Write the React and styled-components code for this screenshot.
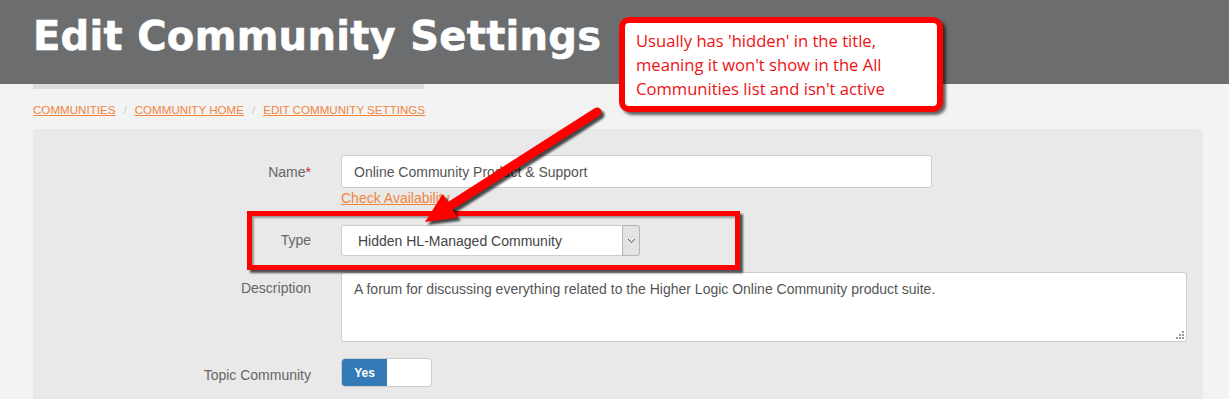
import React from "react";
import styled, { createGlobalStyle } from "styled-components";

const GlobalStyle = createGlobalStyle`
  html, body { margin: 0; padding: 0; background: #f3f3f3; }
  body {
    font-family: "Liberation Sans", Arial, sans-serif;
    width: 1229px;
    height: 399px;
    overflow: hidden;
  }
`;

const Page = styled.div`
  position: relative;
  width: 1229px;
  height: 399px;
  overflow: hidden;
  background: #f3f3f3;
`;

const Header = styled.header`
  box-sizing: border-box;
  height: 84px;
  padding: 13px 0 0 33px;
  background: #6c6d6f;
`;

const Title = styled.h1`
  margin: 0;
  font-family: "DejaVu Sans", "Liberation Sans", Arial, sans-serif;
  font-size: 40px;
  line-height: 46px;
  font-weight: 700;
  letter-spacing: 0.3px;
  color: #ffffff;
  -webkit-text-stroke: 0.6px #ffffff;
`;

const HeaderLip = styled.div`
  margin-left: 33px;
  width: 391px;
  height: 5px;
  background: #dcdcdc;
`;

const Breadcrumbs = styled.nav`
  display: flex;
  margin: 12px 0 0 33px;
  font-size: 11.6px;
  line-height: 17px;
`;

const Crumb = styled.a`
  color: #f0853c;
  text-decoration: underline;
  text-transform: uppercase;
`;

const Sep = styled.span`
  color: #cccccc;
  padding: 0 8px;
`;

const Panel = styled.section`
  box-sizing: border-box;
  margin: 11px 26px 0 33px;
  height: 300px;
  padding: 26px 16px 0 0;
  background: #e9e9e9;
  border-radius: 4px;
`;

const Form = styled.div`
  display: grid;
  grid-template-columns: 278px 1fr;
  column-gap: 30px;
`;

const Label = styled.label`
  text-align: right;
  font-size: 14px;
  line-height: 20px;
  color: #666666;
  padding-top: ${(p) => p.$pt}px;
  margin-top: ${(p) => p.$mt || 0}px;
`;

const Req = styled.span`
  color: #e0202a;
`;

const Field = styled.div`
  margin-top: ${(p) => p.$mt || 0}px;
  display: flex;
  flex-direction: column;
  align-items: flex-start;
`;

const TextInput = styled.div`
  box-sizing: border-box;
  display: flex;
  align-items: center;
  width: 591px;
  height: 33px;
  padding: 0 12px;
  background: #ffffff;
  border: 1px solid #cccccc;
  border-radius: 3px;
  font-size: 14px;
  color: #555555;
`;

const Link = styled.a`
  font-size: 14px;
  line-height: 20px;
  color: #f0853c;
  text-decoration: underline;
`;

const Select = styled.div`
  box-sizing: border-box;
  display: flex;
  width: 299px;
  height: 31px;
  background: #ffffff;
  border: 1px solid #cccccc;
  border-radius: 3px;
`;

const SelectValue = styled.div`
  flex: 1;
  display: flex;
  align-items: center;
  padding-left: 16px;
  font-size: 14px;
  color: #444444;
`;

const SelectArrow = styled.div`
  width: 16px;
  margin: -1px -1px -1px 0;
  display: flex;
  align-items: center;
  justify-content: center;
  background: #e3e3e3;
  border: 1px solid #b5b5b5;
  border-radius: 0 3px 3px 0;
`;

const TextArea = styled.div`
  position: relative;
  box-sizing: border-box;
  width: 846px;
  height: 70px;
  padding: 6px 12px;
  background: #ffffff;
  border: 1px solid #cccccc;
  border-radius: 3px;
  font-size: 14px;
  line-height: 20px;
  color: #555555;
`;

const Grip = styled.svg`
  position: absolute;
  right: 2px;
  bottom: 2px;
`;

const Toggle = styled.div`
  box-sizing: border-box;
  display: flex;
  width: 91px;
  height: 29px;
  background: #ffffff;
  border: 1px solid #cccccc;
  border-radius: 4px;
  overflow: hidden;
`;

const ToggleOn = styled.div`
  width: 45px;
  display: flex;
  align-items: center;
  justify-content: center;
  background: #337ab7;
  color: #ffffff;
  font-size: 12px;
  font-weight: 700;
`;

/* annotation overlays */
const HighlightBox = styled.div`
  position: absolute;
  left: 247px;
  top: 211px;
  width: 493px;
  height: 59px;
  box-sizing: border-box;
  border: 5px solid #ff0000;
  box-shadow: 3px 3px 2px rgba(0, 0, 0, 0.65), inset 2px 2px 2px rgba(0, 0, 0, 0.35);
  pointer-events: none;
`;

const Callout = styled.div`
  position: absolute;
  left: 619px;
  top: 17px;
  width: 324px;
  height: 95px;
  box-sizing: border-box;
  padding: 6px 6px 0 11px;
  background: #ffffff;
  border: 6px solid #ff0000;
  border-radius: 10px;
  box-shadow: 3px 3px 3px rgba(0, 0, 0, 0.6);
  font-family: "Open Sans", "Noto Sans", sans-serif;
  font-size: 16.6px;
  line-height: 24px;
  white-space: nowrap;
  color: #ee1212;
`;

const ArrowSvg = styled.svg`
  position: absolute;
  left: 0;
  top: 0;
  pointer-events: none;
`;

function Arrow() {
  const tail = [597, 112];
  const tip = [425, 222];
  const dx = tip[0] - tail[0];
  const dy = tip[1] - tail[1];
  const len = Math.hypot(dx, dy);
  const ux = dx / len;
  const uy = dy / len;
  const px = -uy;
  const py = ux;
  const headLen = 30;
  const half = 14;
  const bx = tip[0] - ux * headLen;
  const by = tip[1] - uy * headLen;
  const head = `${tip[0]},${tip[1]} ${bx + px * half},${by + py * half} ${bx - px * half},${by - py * half}`;
  const shaftEnd = [bx + ux * 4, by + uy * 4];
  return (
    <ArrowSvg width="1229" height="399" viewBox="0 0 1229 399">
      <defs>
        <filter id="blur" x="-10%" y="-10%" width="120%" height="120%">
          <feGaussianBlur stdDeviation="1.2" />
        </filter>
      </defs>
      <g transform="translate(3 3)" fill="rgba(0,0,0,0.7)" stroke="rgba(0,0,0,0.7)" filter="url(#blur)">
        <line x1={tail[0]} y1={tail[1]} x2={shaftEnd[0]} y2={shaftEnd[1]} strokeWidth="9" strokeLinecap="round" />
        <polygon points={head} stroke="none" />
      </g>
      <g fill="#ff0000" stroke="#ff0000">
        <line x1={tail[0]} y1={tail[1]} x2={shaftEnd[0]} y2={shaftEnd[1]} strokeWidth="9" strokeLinecap="round" />
        <polygon points={head} stroke="none" />
      </g>
    </ArrowSvg>
  );
}

export default function App() {
  return (
    <Page>
      <GlobalStyle />
      <Header>
        <Title>Edit Community Settings</Title>
      </Header>
      <HeaderLip />
      <Breadcrumbs>
        <Crumb>Communities</Crumb>
        <Sep>/</Sep>
        <Crumb>Community Home</Crumb>
        <Sep>/</Sep>
        <Crumb>Edit Community Settings</Crumb>
      </Breadcrumbs>
      <Panel>
        <Form>
          <Label $pt={7}>
            Name<Req>*</Req>
          </Label>
          <Field>
            <TextInput>Online Community Product &amp; Support</TextInput>
            <Link>Check Availability</Link>
          </Field>

          <Label $pt={5} $mt={17}>Type</Label>
          <Field $mt={17}>
            <Select>
              <SelectValue>Hidden HL-Managed Community</SelectValue>
              <SelectArrow>
                <svg width="9" height="6" viewBox="0 0 9 6">
                  <path d="M1 1 L4.5 4.5 L8 1" fill="none" stroke="#555" strokeWidth="1" />
                </svg>
              </SelectArrow>
            </Select>
          </Field>

          <Label $pt={6} $mt={16}>Description</Label>
          <Field $mt={16}>
            <TextArea>
              A forum for discussing everything related to the Higher Logic Online Community product suite.
              <Grip width="9" height="9" viewBox="0 0 9 9">
                <g fill="#9a9a9a">
                  <rect x="7" y="1" width="2" height="2" />
                  <rect x="4" y="4" width="2" height="2" />
                  <rect x="7" y="4" width="2" height="2" />
                  <rect x="1" y="7" width="2" height="2" />
                  <rect x="4" y="7" width="2" height="2" />
                  <rect x="7" y="7" width="2" height="2" />
                </g>
              </Grip>
            </TextArea>
          </Field>

          <Label $pt={7} $mt={16}>Topic Community</Label>
          <Field $mt={16}>
            <Toggle>
              <ToggleOn>Yes</ToggleOn>
            </Toggle>
          </Field>
        </Form>
      </Panel>

      <HighlightBox />
      <Arrow />
      <Callout>
        Usually has 'hidden' in the title,
        <br />
        meaning it won't show in the All
        <br />
        Communities list and isn't active
      </Callout>
    </Page>
  );
}
